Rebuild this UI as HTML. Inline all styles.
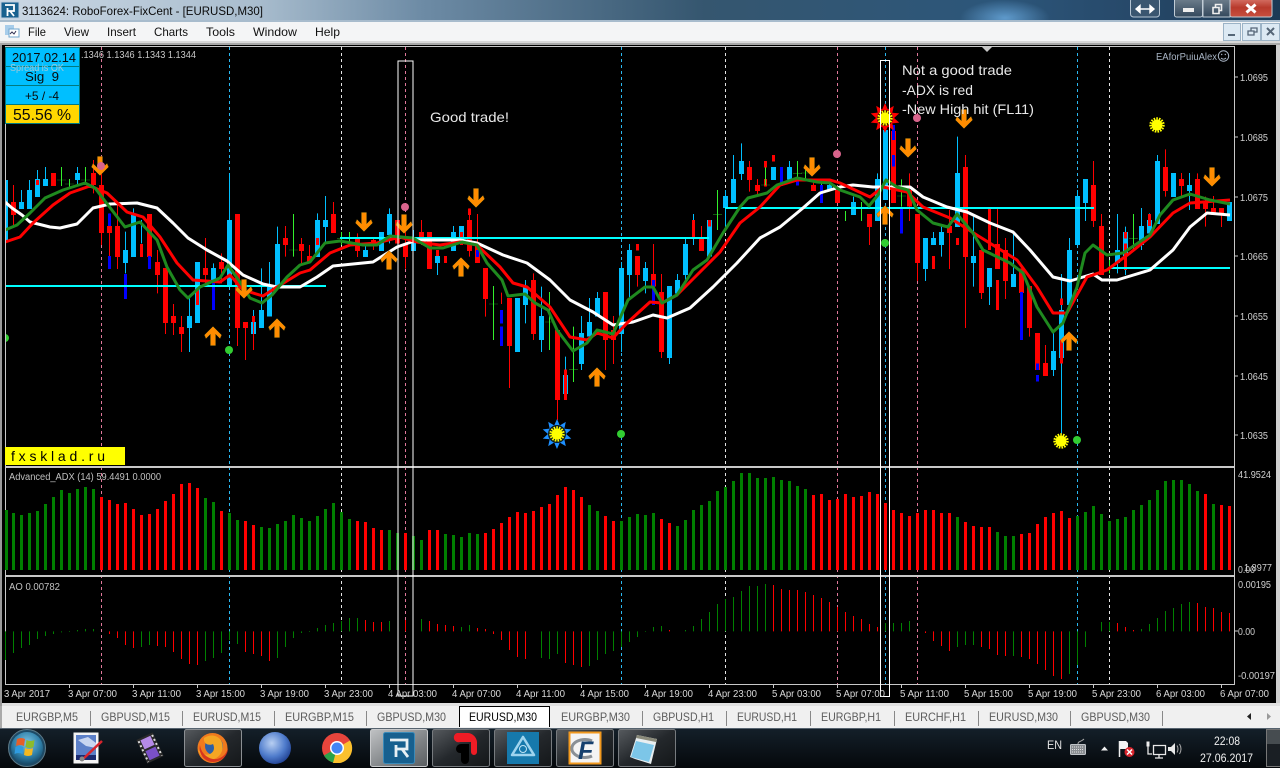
<!DOCTYPE html>
<html><head><meta charset="utf-8"><title>MT4</title>
<style>html,body{margin:0;padding:0;background:#000;overflow:hidden}svg{display:block}text{font-family:"Liberation Sans",sans-serif}</style></head>
<body>
<svg width="1280" height="768" viewBox="0 0 1280 768" xmlns="http://www.w3.org/2000/svg">
<defs>
<clipPath id="c"><rect x="6" y="47" width="1228" height="637"/></clipPath>
<linearGradient id="tb" x1="0" x2="1" y1="0" y2="0"><stop offset="0" stop-color="#cbd8e4"/><stop offset=".2" stop-color="#a9bdce"/><stop offset=".33" stop-color="#6d8ba5"/><stop offset=".55" stop-color="#35566f"/><stop offset=".78" stop-color="#2c567a"/><stop offset=".88" stop-color="#27496a"/><stop offset="1" stop-color="#1c3a55"/></linearGradient>
<radialGradient id="gl"><stop offset="0" stop-color="#6fb0e6" stop-opacity=".75"/><stop offset="1" stop-color="#6fb0e6" stop-opacity="0"/></radialGradient>
<radialGradient id="orb" cx=".5" cy=".35" r=".7"><stop offset="0" stop-color="#7cc4e4"/><stop offset=".6" stop-color="#2f7fa8"/><stop offset="1" stop-color="#123f5c"/></radialGradient>
<radialGradient id="moon" cx=".4" cy=".35" r=".7"><stop offset="0" stop-color="#b8cff2"/><stop offset=".6" stop-color="#4f7ccc"/><stop offset="1" stop-color="#1f3f90"/></radialGradient>
<linearGradient id="tk" x1="0" x2="0" y1="0" y2="1"><stop offset="0" stop-color="#14202a"/><stop offset="1" stop-color="#05080b"/></linearGradient>
<linearGradient id="bt" x1="0" x2="1" y1="0" y2="1"><stop offset="0" stop-color="#565a5e"/><stop offset=".5" stop-color="#24282c"/><stop offset="1" stop-color="#141719"/></linearGradient>
<linearGradient id="bta" x1="0" x2="1" y1="0" y2="1"><stop offset="0" stop-color="#c0c2c4"/><stop offset=".6" stop-color="#7e8285"/><stop offset="1" stop-color="#5a5e61"/></linearGradient>
<linearGradient id="cl" x1="0" x2="0" y1="0" y2="1"><stop offset="0" stop-color="#d8776c"/><stop offset=".5" stop-color="#b83a2c"/><stop offset="1" stop-color="#c9503f"/></linearGradient>
<linearGradient id="wb" x1="0" x2="0" y1="0" y2="1"><stop offset="0" stop-color="#70808e"/><stop offset="1" stop-color="#33485c"/></linearGradient>
<path id="d" d="M-2.5-9.5H2.5V2L7-2.5 8.5 1 0 9.5-8.5 1-7-2.5-2.5 2Z" fill="#ff8c00" stroke="#8a6a10" stroke-width=".5"/>
<path id="u" d="M-2.5 9.5H2.5V-2L7 2.5 8.5-1 0-9.5-8.5-1-7 2.5-2.5-2Z" fill="#ff8c00" stroke="#8a6a10" stroke-width=".5"/>
<polygon id="st" points="15,0 8.6,2.8 12.1,8.8 5.3,7.3 4.6,14.3 0,9 -4.6,14.3 -5.3,7.3 -12.1,8.8 -8.6,2.8 -15,0 -8.6,-2.8 -12.1,-8.8 -5.3,-7.3 -4.6,-14.3 0,-9 4.6,-14.3 5.3,-7.3 12.1,-8.8 8.6,-2.8"/>
<g id="sun"><circle r="5.5" fill="#ff0"/><circle r="6.5" fill="none" stroke="#ff0" stroke-width="2.4" stroke-dasharray="1.6 1.1"/></g>
</defs>

<!-- title bar -->
<rect width="1280" height="22" fill="url(#tb)"/>
<ellipse cx="1005" cy="18" rx="45" ry="18" fill="url(#gl)"/>
<rect y="20" width="1280" height="2" fill="#a8bccd"/>
<rect x="1" y="2" width="18" height="16" fill="#18618f" stroke="#bcd" stroke-width="1"/>
<path d="M5 5H14V11H7.500M7.500 8V16M10 11L14 16" fill="none" stroke="#fff" stroke-width="1.800"/>
<text x="22" y="15" font-size="12" fill="#0a0a0a" textLength="241" lengthAdjust="spacingAndGlyphs">3113624: RoboForex-FixCent - [EURUSD,M30]</text>
<rect x="1130.500" y="-2" width="29" height="19" rx="3" fill="#3a5670" stroke="#b4c4d2"/>
<path d="M1136 9h18M1136 9l4-3.500v7zM1154 9l-4-3.500v7z" stroke="#fff" fill="#fff" stroke-width="1.400"/>
<rect x="1174.500" y="-2" width="28" height="19" rx="2" fill="url(#wb)" stroke="#c0ccd6"/>
<rect x="1203" y="-2" width="27" height="19" fill="url(#wb)" stroke="#c0ccd6"/>
<rect x="1230" y="-2" width="42" height="19" rx="2" fill="url(#cl)" stroke="#c0ccd6"/>
<rect x="1183" y="8" width="11" height="4" fill="#eee"/>
<path d="M1213 7.500h6v6h-6zM1215.500 7v-2.500h6v6h-2" fill="none" stroke="#eee" stroke-width="1.600"/>
<path d="M1246.500 4.500l9 8M1255.500 4.500l-9 8" stroke="#fff" stroke-width="3"/>

<!-- menu bar -->
<rect y="22" width="1280" height="20" fill="#f4f5f6"/>
<rect y="41" width="1280" height="2" fill="#d8d8d8"/>
<rect x="5" y="25" width="9" height="10" fill="#a8cdea"/><rect x="9" y="29" width="10" height="8" fill="#fff" stroke="#6fa6cf"/><path d="M10 34l2-2 2 2 2-3" stroke="#335" fill="none"/>
<g font-size="12" fill="#111">
<text x="28" y="36" textLength="18" lengthAdjust="spacingAndGlyphs">File</text>
<text x="64" y="36" textLength="25" lengthAdjust="spacingAndGlyphs">View</text>
<text x="107" y="36" textLength="29" lengthAdjust="spacingAndGlyphs">Insert</text>
<text x="154" y="36" textLength="34" lengthAdjust="spacingAndGlyphs">Charts</text>
<text x="206" y="36" textLength="29" lengthAdjust="spacingAndGlyphs">Tools</text>
<text x="253" y="36" textLength="44" lengthAdjust="spacingAndGlyphs">Window</text>
<text x="315" y="36" textLength="25" lengthAdjust="spacingAndGlyphs">Help</text>
</g>
<g fill="#dce9f3" stroke="#9cb3c6"><rect x="1223.500" y="23.500" width="17" height="17"/><rect x="1242.500" y="23.500" width="18" height="17"/><rect x="1261.500" y="23.500" width="18" height="17"/></g>
<rect x="1228" y="34" width="7" height="2" fill="#567"/>
<path d="M1248 31h6v4h-6zM1251 31v-3h6v4h-3" fill="none" stroke="#567" stroke-width="1.300"/>
<path d="M1267 28l7 7M1274 28l-7 7" stroke="#567" stroke-width="2"/>

<!-- chart area -->
<rect x="0" y="43" width="1280" height="663" fill="#000"/>
<rect x="0" y="43" width="2" height="663" fill="#9a9a9a"/>
<rect x="1276" y="43" width="4" height="663" fill="#cfcfcf"/>
<rect x="0" y="43" width="1280" height="2" fill="#a8a8a8"/>
<rect x="2" y="703" width="1278" height="3" fill="#e0e0e0"/>

<!-- dashed grid -->
<g fill="none" stroke-width="1" stroke-dasharray="3 3">
<path stroke="#e0789a" d="M101.500 47V684M405.500 47V684M837.500 47V684M917.500 47V684"/>
<path stroke="#2ab8f0" d="M5.500 47V684M229.500 47V684M621.500 47V684M885.500 47V684M1077.500 47V684"/>
<path stroke="#e4e4e4" d="M341.500 47V684M725.500 47V684M1109.500 47V684"/>
</g>

<g clip-path="url(#c)">
<!-- candles group A -->
<g transform="translate(0 130) scale(1 .33333)" fill="none" shape-rendering="crispEdges">
<path stroke="#00bfff" d="M21.500 180V237M29.500 150V180M37.500 120V147M45.500 111V147M77.500 111V165M125.500 305V430M133.500 235V255M141.500 270V340M189.500 500V666M213.500 400V414M229.500 130V470M253.500 540V576M261.500 415V540M269.500 396V465M277.500 290V342M317.500 250V270M325.500 198V340M365.500 340V360M389.500 235V340M413.500 300V324"/>
<path stroke="#00bfff" stroke-width="5" d="M5.500 150V330M21.500 216V237M29.500 180V237M37.500 147V201M45.500 147V168M77.500 129V150M125.500 360V399M133.500 255V381M189.500 558V594M197.500 396V579M213.500 414V450M229.500 270V465M253.500 576V612M261.500 540V594M269.500 465V560M277.500 342V465M317.500 270V381M325.500 270V291M365.500 360V381M381.500 306V363M389.500 252V315M413.500 324V363"/>
<path stroke="#f00" d="M13.500 165V290M93.500 90V190M101.500 130V345M109.500 250V400M117.500 225V417M157.500 360V490M165.500 579V612M173.500 522V615M181.500 558V666M205.500 324V460M221.500 370V460M237.500 594V648M245.500 594V690M253.500 576V660M285.500 288V380M301.500 324V400M309.500 345V396M333.500 216V252M357.500 310V381M373.500 324V360M405.500 300V416"/>
<path stroke="#f00" stroke-width="5" d="M13.500 216V255M53.500 129V168M93.500 129V165M101.500 165V309M109.500 288V309M117.500 288V381M149.500 252V381M157.500 396V435M165.500 414V579M173.500 558V579M181.500 591V612M205.500 414V435M221.500 396V417M237.500 252V594M245.500 576V594M285.500 324V345M301.500 342V363M309.500 378V396M333.500 252V309M357.500 324V363M373.500 330V345M397.500 270V340M405.500 342V381"/>
<path stroke="#f00" stroke-width="3" d="M37.500 150V165M141.500 342V381M197.500 480V525M253.500 558V576M317.500 324V345"/>
<path stroke="#32f02c" d="M61.500 111V168M57 150H66M69.500 147V175M65 162H74M85.500 111V160M81 150H90M293.500 252V380M289 360H298M341.500 306V345M337 325H346M349.500 306V345M345 325H354"/>
<path stroke="#00f" stroke-width="3" d="M109.500 250V288M109.500 378V417M125.500 432V507M149.500 378V417M213.500 456V540"/>
</g>
<!-- candles group B -->
<g transform="translate(0 130) scale(1 .33333)" fill="none" shape-rendering="crispEdges">
<path stroke="#00bfff" d="M437.500 399V435M453.500 288V306M525.500 450V580M541.500 470V666M565.500 680V735M581.500 558V720M589.500 504V576M597.500 486V504M621.500 396V666M629.500 342V510M645.500 396V490M677.500 432V450M685.500 324V450M693.500 252V345M725.500 180V300M733.500 75V147M741.500 40V150M789.500 93V111M797.500 93V150M781.500 111V168M829.500 148V165M669.500 684V702"/>
<path stroke="#00bfff" stroke-width="5" d="M437.500 378V399M453.500 306V363M461.500 288V330M517.500 504V666M525.500 470V525M541.500 558V630M565.500 735V792M581.500 609V702M589.500 576V620M597.500 504V560M621.500 414V612M629.500 360V435M645.500 414V453M669.500 468V684M677.500 450V490M685.500 342V435M709.500 270V380M725.500 198V234M733.500 147V219M741.500 93V132M773.500 111V150M789.500 111V148M829.500 165V180"/>
<path stroke="#f00" d="M421.500 270V345M477.500 252V340M469.500 235V380M485.500 507V560M501.500 488V522M509.500 648V774M533.500 430V630M557.500 810V870M605.500 630V720M613.500 558V702M637.500 435V470M653.500 342V432M661.500 432V684M701.500 288V324M749.500 93V185M757.500 147V200M765.500 147V170M813.500 148V165"/>
<path stroke="#f00" stroke-width="5" d="M421.500 306V324M429.500 306V417M469.500 270V363M477.500 340V399M485.500 414V507M509.500 504V648M533.500 450V612M557.500 600V810M605.500 486V630M613.500 600V630M637.500 378V435M653.500 432V470M661.500 486V666M701.500 324V363M749.500 111V150M757.500 165V183M813.500 165V183M837.500 180V219"/>
<path stroke="#f00" stroke-width="3" d="M437.500 360V378M445.500 378V399M461.500 306V345M469.500 235V255M565.500 718V810M637.500 342V362M693.500 270V325M709.500 270V290M765.500 93V112M765.500 147V170M773.500 75V95"/>
<path stroke="#32f02c" d="M493.500 468V630M489 522H498M549.500 486V660M545 576H554M573.500 590V756M569 718H578M717.500 180V300M713 253H722M765.500 112V165M761 165H770M797.500 93V150M793 130H802M805.500 112V148M801 129H810M821.500 148V165"/>
<path stroke="#00f" stroke-width="3" d="M477.500 360V381M501.500 540V580M501.500 590V648M653.500 450V525M781.500 111V168M797.500 147V167M821.500 165V219"/>
</g>
<!-- candles group C -->
<g transform="translate(0 100) scale(1 .33333)" fill="none" shape-rendering="crispEdges">
<path stroke="#00bfff" d="M853.500 290V306M877.500 220V237M925.500 507V543M933.500 396V414M941.500 378V470M957.500 110V219M973.500 350V560M989.500 561V615M1013.500 400V522M1053.500 700V828M1061.500 522V1000M1069.500 414V450M1077.500 270V288M1085.500 309V363M1117.500 342V520M1125.500 380V525M1141.500 324V450M1149.500 340V400M1157.500 165V183M1189.500 219V330"/>
<path stroke="#00bfff" stroke-width="5" d="M853.500 306V345M877.500 237V363M885.500 90V300M925.500 414V507M933.500 414V435M941.500 396V435M957.500 219V381M973.500 468V489M989.500 504V561M1013.500 522V561M1053.500 753V810M1061.500 630V774M1069.500 450V615M1077.500 288V435M1085.500 237V309M1117.500 450V489M1125.500 396V468M1141.500 378V435M1149.500 360V400M1157.500 183V372M1173.500 219V291M1189.500 255V273M1229.500 306V363"/>
<path stroke="#f00" d="M869.500 381V435M909.500 220V363M917.500 489V543M949.500 330V507M965.500 165V684M981.500 579V597M997.500 326V432M1005.500 414V597M1029.500 684V710M1045.500 735V789M1093.500 183V381M1101.500 342V520M1165.500 148V290M1181.500 219V290M1197.500 220V237M1205.500 290V380M1213.500 288V345M1221.500 345V381"/>
<path stroke="#f00" stroke-width="5" d="M869.500 342V381M893.500 93V309M909.500 270V320M917.500 342V489M949.500 378V399M965.500 201V471M981.500 450V579M997.500 432V507M1005.500 450V543M1021.500 505V579M1029.500 558V684M1037.500 699V810M1045.500 789V828M1093.500 255V363M1101.500 378V525M1165.500 201V273M1181.500 237V258M1197.500 237V327M1205.500 306V327M1213.500 324V345M1221.500 324V345"/>
<path stroke="#f00" stroke-width="3" d="M933.500 468V507M957.500 414V435M989.500 324V450M997.500 540V630M1061.500 595V615M1061.500 720V790M1125.500 396V415M1125.500 430V510M1149.500 342V378"/>
<path stroke="#32f02c" d="M845.500 333V363M861.500 306V363M901.500 238V320M897 288H906M1109.500 480V520M1133.500 342V450M1129 415H1138"/>
<path stroke="#00f" stroke-width="3" d="M893.500 75V120M893.500 165V200M901.500 324V400M1021.500 576V720M1037.500 790V810M1037.500 825V845"/>
</g>

<!-- horizontal cyan -->
<path d="M5 286H326M340 238H709M725 208H1094M1109 268H1230" stroke="#0ff" stroke-width="2" fill="none"/>

<!-- moving averages -->
<g fill="none" stroke-width="3" stroke-linejoin="round">
<polyline stroke="#fff" points="5,202 12,208 22,215 30,222 50,227 60,228 77,224 93,208 110,204 137,203 157,208 173,223 188,238 207,250 227,261 243,275 263,284 277,287 300,287 317,277 333,266 373,262 397,247 417,240 460,240 477,243 503,255 527,263 550,280 570,300 593,312 613,325 633,322 653,315 667,318 690,308 713,287 737,263 760,238 780,227 803,208 820,193 840,187 853,185 873,187 910,187 923,197 947,207 967,212 990,223 1013,232 1030,250 1053,277 1070,281 1093,274 1102,280 1117,280 1150,270 1173,250 1190,227 1207,213 1230,215"/>
<polyline stroke="#f00" points="5,242 20,237 33,223 53,205 70,193 90,186 107,193 127,212 143,217 160,237 177,263 193,280 220,282 230,275 243,290 263,296 277,287 300,273 310,270 330,253 350,245 377,243 400,237 417,242 440,245 460,242 477,245 500,267 513,283 527,287 550,307 570,337 587,340 597,333 613,338 627,323 650,302 662,303 677,295 697,275 720,252 740,223 760,207 780,185 797,180 830,180 840,183 870,197 883,187 907,192 923,207 950,218 980,237 1017,260 1037,287 1053,313 1067,313 1087,277 1107,270 1130,253 1150,237 1173,213 1190,203 1230,200"/>
<polyline stroke="#1f8a1f" points="5,230 17,225 30,213 45,198 63,190 85,183 95,188 108,205 125,227 140,222 157,240 167,267 180,290 188,298 200,287 220,278 228,265 242,285 250,298 262,303 272,295 287,277 300,265 310,262 325,243 340,241 363,245 377,245 390,236 413,238 430,248 443,248 462,242 477,245 487,263 502,280 508,296 525,294 535,303 548,310 557,330 573,351 587,343 597,330 613,334 628,300 645,287 653,287 662,303 677,295 693,270 707,260 723,233 740,207 748,198 767,193 777,185 797,178 817,182 830,183 840,190 860,197 869,206 878,195 886,180 897,187 908,190 917,210 933,223 948,227 957,214 973,233 983,250 1010,263 1023,273 1037,307 1053,332 1063,323 1077,287 1085,253 1093,245 1107,255 1123,253 1150,235 1160,215 1173,200 1190,194 1210,200 1230,204"/>
</g>

<!-- arrows -->
<use href="#d" x="100" y="166"/><use href="#d" x="364" y="222"/><use href="#d" x="404" y="224"/><use href="#d" x="244" y="289"/><use href="#d" x="476" y="198"/><use href="#d" x="812" y="167"/><use href="#d" x="908" y="148"/><use href="#d" x="964" y="119"/><use href="#d" x="1212" y="177"/>
<use href="#u" x="213" y="336"/><use href="#u" x="277" y="328"/><use href="#u" x="389" y="260"/><use href="#u" x="461" y="267"/><use href="#u" x="597" y="377"/><use href="#u" x="885" y="215"/><use href="#u" x="1069" y="341"/>

<!-- dots -->
<g fill="#d8648c"><circle cx="101" cy="166" r="4"/><circle cx="405" cy="207" r="4"/><circle cx="837" cy="154" r="4"/><circle cx="917" cy="118" r="4"/></g>
<g fill="#32cd32"><circle cx="229" cy="350" r="4"/><circle cx="621" cy="434" r="4"/><circle cx="885" cy="243" r="4"/><circle cx="1077" cy="440" r="4"/><circle cx="5" cy="338" r="4"/></g>

<!-- stars -->
<g transform="translate(557 434)"><use href="#st" fill="#1e90ff" transform="rotate(18)"/><circle r="9" fill="#0a1a20"/><use href="#sun"/></g>
<g transform="translate(885 118)"><use href="#st" fill="#f00" transform="rotate(18)"/><circle r="8" fill="#300"/><use href="#sun"/></g>
<use href="#sun" x="1061" y="441"/><use href="#sun" x="1157" y="125"/>
</g>

<!-- panes frame -->
<g fill="none" stroke="#c8c8c8">
<path d="M5.500 46.500H1234.500V684.500H5.500Z"/>
<path d="M5 466.500H1234M5 467.500H1234M5 575.500H1234M5 576.500H1234"/>
</g>
<path d="M981 46h12l-6 6z" fill="#c8c8c8"/>

<!-- ADX -->
<g transform="translate(0 460) scale(1 .33333)" fill="none" stroke-width="3" shape-rendering="crispEdges" clip-path="none">
<path stroke="#008000" d="M6.500 330V150M13.500 330V159M21.500 330V165M29.500 330V159M37.500 330V153M45.500 330V132M53.500 330V111M61.500 330V90M69.500 330V99M77.500 330V87M85.500 330V81M93.500 330V87M205.500 330V114M213.500 330V126M229.500 330V159M237.500 330V180M261.500 330V201M269.500 330V204M277.500 330V192M285.500 330V183M293.500 330V165M301.500 330V174M309.500 330V183M317.500 330V168M325.500 330V147M333.500 330V129M341.500 330V156M349.500 330V177M389.500 330V210M397.500 330V219M413.500 330V228M421.500 330V240M445.500 330V222M453.500 330V225M461.500 330V231M469.500 330V219M477.500 330V222M589.500 330V135M597.500 330V153M621.500 330V183M629.500 330V171M637.500 330V162M645.500 330V165M653.500 330V159M677.500 330V198M685.500 330V180M693.500 330V150M701.500 330V135M709.500 330V123M717.500 330V93M725.500 330V81M733.500 330V63M741.500 330V39M749.500 330V39M757.500 330V54M765.500 330V54M773.500 330V51M781.500 330V60M789.500 330V63M797.500 330V78M805.500 330V87M957.500 330V171M997.500 330V216M1005.500 330V228M1013.500 330V228M1077.500 330V168M1085.500 330V156M1093.500 330V138M1101.500 330V162M1109.500 330V183M1117.500 330V177M1125.500 330V171M1133.500 330V150M1141.500 330V135M1149.500 330V120M1157.500 330V90M1165.500 330V63M1173.500 330V60M1181.500 330V60M1189.500 330V72M1197.500 330V93M1213.500 330V132"/>
<path stroke="#f00" d="M101.500 330V111M109.500 330V120M117.500 330V132M125.500 330V129M133.500 330V147M141.500 330V165M149.500 330V162M157.500 330V147M165.500 330V123M173.500 330V102M181.500 330V72M189.500 330V69M197.500 330V84M221.500 330V153M245.500 330V183M253.500 330V195M357.500 330V183M365.500 330V186M373.500 330V204M381.500 330V210M405.500 330V219M429.500 330V210M437.500 330V210M485.500 330V219M493.500 330V207M501.500 330V189M509.500 330V171M517.500 330V156M525.500 330V159M533.500 330V153M541.500 330V141M549.500 330V132M557.500 330V105M565.500 330V81M573.500 330V90M581.500 330V111M605.500 330V168M613.500 330V183M661.500 330V177M669.500 330V189M813.500 330V105M821.500 330V102M829.500 330V120M837.500 330V117M845.500 330V102M853.500 330V111M861.500 330V108M869.500 330V96M877.500 330V102M885.500 330V129M893.500 330V150M901.500 330V159M909.500 330V168M917.500 330V159M925.500 330V150M933.500 330V150M941.500 330V159M949.500 330V159M965.500 330V186M973.500 330V198M981.500 330V201M989.500 330V201M1021.500 330V222M1029.500 330V219M1037.500 330V192M1045.500 330V171M1053.500 330V159M1061.500 330V153M1069.500 330V174M1205.500 330V102M1221.500 330V135M1229.500 330V138"/>
</g>

<!-- AO -->
<g transform="translate(0 460) scale(1 .33333)" fill="none" stroke-width="1" shape-rendering="crispEdges">
<path stroke="#008000" d="M5.500 514V600M13.500 514V579M21.500 514V564M29.500 514V555M37.500 514V537M45.500 514V528M53.500 514V522M61.500 514V517M69.500 514V516M77.500 514V510M85.500 514V507M93.500 514V507M141.500 514V561M149.500 514V555M205.500 514V603M213.500 514V594M221.500 514V579M229.500 514V540M237.500 514V552M277.500 514V594M285.500 514V561M293.500 514V534M301.500 514V519M309.500 514V516M317.500 514V504M325.500 514V495M333.500 514V489M341.500 514V483M349.500 514V474M357.500 514V474M389.500 514V483M421.500 514V477M461.500 514V501M469.500 514V495M541.500 514V594M549.500 514V597M557.500 514V582M589.500 514V618M597.500 514V600M605.500 514V582M613.500 514V573M621.500 514V561M629.500 514V546M637.500 514V531M645.500 514V516M653.500 514V501M661.500 514V498M685.500 514V510M693.500 514V498M701.500 514V477M709.500 514V456M717.500 514V432M725.500 514V417M733.500 514V411M741.500 514V393M749.500 514V378M757.500 514V378M765.500 514V372M885.500 514V489M893.500 514V489M901.500 514V489M909.500 514V483M957.500 514V561M965.500 514V555M973.500 514V555M1013.500 514V588M1069.500 514V642M1077.500 514V615M1085.500 514V561M1101.500 514V486M1109.500 514V486M1141.500 514V507M1149.500 514V492M1157.500 514V474M1165.500 514V453M1173.500 514V444M1181.500 514V432M1189.500 514V426"/>
<path stroke="#f00" d="M109.500 514V522M117.500 514V534M125.500 514V555M133.500 514V564M157.500 514V558M165.500 514V561M173.500 514V576M181.500 514V597M189.500 514V612M197.500 514V615M245.500 514V576M253.500 514V582M261.500 514V588M269.500 514V603M365.500 514V480M373.500 514V486M381.500 514V486M405.500 514V480M429.500 514V483M437.500 514V492M445.500 514V495M453.500 514V498M477.500 514V504M485.500 514V507M493.500 514V522M501.500 514V540M509.500 514V570M517.500 514V591M525.500 514V597M565.500 514V609M573.500 514V615M581.500 514V621M669.500 514V510M773.500 514V375M781.500 514V387M789.500 514V390M797.500 514V390M805.500 514V396M813.500 514V405M821.500 514V414M829.500 514V426M837.500 514V441M845.500 514V456M853.500 514V468M861.500 514V477M869.500 514V492M877.500 514V501M925.500 514V519M933.500 514V543M941.500 514V558M949.500 514V573M981.500 514V561M989.500 514V567M997.500 514V585M1005.500 514V588M1021.500 514V591M1029.500 514V597M1037.500 514V612M1045.500 514V630M1053.500 514V648M1061.500 514V657M1117.500 514V489M1125.500 514V501M1133.500 514V510M1197.500 514V429M1205.500 514V441M1213.500 514V444M1221.500 514V456M1229.500 514V459"/>
</g>

<!-- annotation boxes -->
<rect x="398" y="61" width="15" height="635" fill="none" stroke="#fff"/>
<rect x="880.500" y="60.500" width="9" height="636" fill="none" stroke="#fff"/>

<!-- info panel -->
<g stroke="#007a80" stroke-width="1">
<rect x="5.500" y="47.500" width="74" height="19" fill="#00bfff"/>
<rect x="5.500" y="66.500" width="74" height="19" fill="#00bfff"/>
<rect x="5.500" y="85.500" width="74" height="19" fill="#00bfff"/>
<rect x="5.500" y="104.500" width="74" height="19" fill="#ffd700"/>
</g>
<g fill="#0a0a0a">
<text x="12" y="62" font-size="13" textLength="64" lengthAdjust="spacingAndGlyphs">2017.02.14</text>
<text x="25" y="81" font-size="13" textLength="34" lengthAdjust="spacingAndGlyphs" xml:space="preserve">Sig  9</text>
<text x="25" y="100" font-size="12" textLength="34" lengthAdjust="spacingAndGlyphs">+5 / -4</text>
<text x="13" y="120" font-size="16" textLength="58" lengthAdjust="spacingAndGlyphs">55.56 %</text>
</g>
<text x="10" y="71" font-size="10" fill="#9fc8d8" textLength="54" lengthAdjust="spacingAndGlyphs">Spread is OK</text>
<text x="81" y="58" font-size="10" fill="#c8c8c8" textLength="115" lengthAdjust="spacingAndGlyphs">.1346 1.1346 1.1343 1.1344</text>

<rect x="5" y="447" width="120" height="18" fill="#ff0"/>
<text x="11" y="461" font-size="14" fill="#000" textLength="94">fxsklad.ru</text>

<!-- annotation text -->
<g font-size="14" fill="#e8e8e8">
<text x="430" y="122" textLength="79" lengthAdjust="spacingAndGlyphs">Good trade!</text>
<text x="902" y="75" textLength="110" lengthAdjust="spacingAndGlyphs">Not a good trade</text>
<text x="902" y="95" textLength="71" lengthAdjust="spacingAndGlyphs">-ADX is red</text>
<text x="902" y="114" textLength="132" lengthAdjust="spacingAndGlyphs">-New High hit (FL11)</text>
</g>
<text x="1156" y="60" font-size="10" fill="#a8b4c4" textLength="61" lengthAdjust="spacingAndGlyphs">EAforPuiuAlex</text>
<g fill="none" stroke="#a8b4c4"><circle cx="1223.500" cy="56" r="5.200"/><path d="M1221 58c1.500 1.500 3.500 1.500 5 0"/></g>
<circle cx="1221.700" cy="54.500" r=".7" fill="#a8b4c4"/><circle cx="1225.300" cy="54.500" r=".7" fill="#a8b4c4"/>

<!-- panel labels -->
<g font-size="10" fill="#c0c0c0">
<text x="9" y="480" textLength="152" lengthAdjust="spacingAndGlyphs">Advanced_ADX (14) 59.4491 0.0000</text>
<text x="9" y="590" textLength="51" lengthAdjust="spacingAndGlyphs">AO 0.00782</text>
</g>

<!-- price axis -->
<path d="M1234 77h4M1234 137h4M1234 197h4M1234 256h4M1234 316h4M1234 376h4M1234 435h4M1234 631h4" stroke="#c8c8c8"/>
<g font-size="10" fill="#d0d0d0">
<text x="1240" y="81" textLength="28" lengthAdjust="spacingAndGlyphs">1.0695</text>
<text x="1240" y="141" textLength="28" lengthAdjust="spacingAndGlyphs">1.0685</text>
<text x="1240" y="201" textLength="28" lengthAdjust="spacingAndGlyphs">1.0675</text>
<text x="1240" y="260" textLength="28" lengthAdjust="spacingAndGlyphs">1.0665</text>
<text x="1240" y="320" textLength="28" lengthAdjust="spacingAndGlyphs">1.0655</text>
<text x="1240" y="380" textLength="28" lengthAdjust="spacingAndGlyphs">1.0645</text>
<text x="1240" y="439" textLength="28" lengthAdjust="spacingAndGlyphs">1.0635</text>
<text x="1238" y="478" textLength="33" lengthAdjust="spacingAndGlyphs">41.9524</text>
<text x="1238" y="573" textLength="17" lengthAdjust="spacingAndGlyphs">0.00</text>
<text x="1244" y="571" textLength="28" lengthAdjust="spacingAndGlyphs">1.8977</text>
<text x="1238" y="588" textLength="33" lengthAdjust="spacingAndGlyphs">0.00195</text>
<text x="1238" y="635" textLength="17" lengthAdjust="spacingAndGlyphs">0.00</text>
<text x="1238" y="679" textLength="37" lengthAdjust="spacingAndGlyphs">-0.00197</text>
</g>

<!-- time axis -->
<path d="M69.500 684v4M133.500 684v4M197.500 684v4M261.500 684v4M325.500 684v4M389.500 684v4M453.500 684v4M517.500 684v4M581.500 684v4M645.500 684v4M709.500 684v4M773.500 684v4M837.500 684v4M901.500 684v4M965.500 684v4M1029.500 684v4M1093.500 684v4M1157.500 684v4M1221.500 684v4" stroke="#c8c8c8"/>
<g font-size="10" fill="#d8d8d8">
<text x="4" y="697" textLength="46" lengthAdjust="spacingAndGlyphs">3 Apr 2017</text>
<text x="68" y="697" textLength="49" lengthAdjust="spacingAndGlyphs">3 Apr 07:00</text>
<text x="132" y="697" textLength="49" lengthAdjust="spacingAndGlyphs">3 Apr 11:00</text>
<text x="196" y="697" textLength="49" lengthAdjust="spacingAndGlyphs">3 Apr 15:00</text>
<text x="260" y="697" textLength="49" lengthAdjust="spacingAndGlyphs">3 Apr 19:00</text>
<text x="324" y="697" textLength="49" lengthAdjust="spacingAndGlyphs">3 Apr 23:00</text>
<text x="388" y="697" textLength="49" lengthAdjust="spacingAndGlyphs">4 Apr 03:00</text>
<text x="452" y="697" textLength="49" lengthAdjust="spacingAndGlyphs">4 Apr 07:00</text>
<text x="516" y="697" textLength="49" lengthAdjust="spacingAndGlyphs">4 Apr 11:00</text>
<text x="580" y="697" textLength="49" lengthAdjust="spacingAndGlyphs">4 Apr 15:00</text>
<text x="644" y="697" textLength="49" lengthAdjust="spacingAndGlyphs">4 Apr 19:00</text>
<text x="708" y="697" textLength="49" lengthAdjust="spacingAndGlyphs">4 Apr 23:00</text>
<text x="772" y="697" textLength="49" lengthAdjust="spacingAndGlyphs">5 Apr 03:00</text>
<text x="836" y="697" textLength="49" lengthAdjust="spacingAndGlyphs">5 Apr 07:00</text>
<text x="900" y="697" textLength="49" lengthAdjust="spacingAndGlyphs">5 Apr 11:00</text>
<text x="964" y="697" textLength="49" lengthAdjust="spacingAndGlyphs">5 Apr 15:00</text>
<text x="1028" y="697" textLength="49" lengthAdjust="spacingAndGlyphs">5 Apr 19:00</text>
<text x="1092" y="697" textLength="49" lengthAdjust="spacingAndGlyphs">5 Apr 23:00</text>
<text x="1156" y="697" textLength="49" lengthAdjust="spacingAndGlyphs">6 Apr 03:00</text>
<text x="1220" y="697" textLength="49" lengthAdjust="spacingAndGlyphs">6 Apr 07:00</text>
</g>

<!-- tabs -->
<rect y="706" width="1280" height="22" fill="#f0f0f0"/>
<rect x="0" y="706" width="2" height="22" fill="#aaa"/>
<path d="M90.500 711v15M182.500 711v15M274.500 711v15M366.500 711v15M642.500 711v15M726.500 711v15M810.500 711v15M894.500 711v15M978.500 711v15M1070.500 711v15M1162.500 711v15" stroke="#888"/>
<path d="M459.500 727V706.500H549.500V727" fill="#fff" stroke="#000"/>
<rect x="460" y="707" width="89" height="20" fill="#fff"/>
<g font-size="12" fill="#5c5c5c">
<text x="16" y="721" textLength="62" lengthAdjust="spacingAndGlyphs">EURGBP,M5</text>
<text x="101" y="721" textLength="69" lengthAdjust="spacingAndGlyphs">GBPUSD,M15</text>
<text x="193" y="721" textLength="68" lengthAdjust="spacingAndGlyphs">EURUSD,M15</text>
<text x="285" y="721" textLength="69" lengthAdjust="spacingAndGlyphs">EURGBP,M15</text>
<text x="377" y="721" textLength="69" lengthAdjust="spacingAndGlyphs">GBPUSD,M30</text>
<text x="469" y="721" textLength="68" lengthAdjust="spacingAndGlyphs" fill="#000">EURUSD,M30</text>
<text x="561" y="721" textLength="69" lengthAdjust="spacingAndGlyphs">EURGBP,M30</text>
<text x="653" y="721" textLength="61" lengthAdjust="spacingAndGlyphs">GBPUSD,H1</text>
<text x="737" y="721" textLength="60" lengthAdjust="spacingAndGlyphs">EURUSD,H1</text>
<text x="821" y="721" textLength="60" lengthAdjust="spacingAndGlyphs">EURGBP,H1</text>
<text x="905" y="721" textLength="61" lengthAdjust="spacingAndGlyphs">EURCHF,H1</text>
<text x="989" y="721" textLength="69" lengthAdjust="spacingAndGlyphs">EURUSD,M30</text>
<text x="1081" y="721" textLength="69" lengthAdjust="spacingAndGlyphs">GBPUSD,M30</text>
</g>
<path d="M1251 713v7l-4-3.500z" fill="#222"/><path d="M1267 713v7l4-3.500z" fill="#999"/>

<!-- taskbar -->
<rect y="728" width="1280" height="40" fill="url(#tk)"/>
<rect y="728" width="1280" height="1" fill="#56636f"/>
<rect x="184.500" y="729.500" width="57" height="37" rx="2" fill="url(#bt)" stroke="#8b8f93"/>
<rect x="370.500" y="729.500" width="57" height="37" rx="2" fill="url(#bta)" stroke="#c8cacc"/>
<rect x="432.500" y="729.500" width="57" height="37" rx="2" fill="url(#bt)" stroke="#777b7f"/>
<rect x="494.500" y="729.500" width="57" height="37" rx="2" fill="url(#bt)" stroke="#777b7f"/>
<rect x="556.500" y="729.500" width="57" height="37" rx="2" fill="url(#bt)" stroke="#777b7f"/>
<rect x="618.500" y="729.500" width="57" height="37" rx="2" fill="url(#bt)" stroke="#777b7f"/>

<!-- start orb -->
<circle cx="27" cy="748" r="18.500" fill="#1d4a66" stroke="#5d7a88"/>
<circle cx="27" cy="748" r="16" fill="url(#orb)"/>
<path d="M17 739q4-2 8 0l-1 7q-4-2-8 0z" fill="#e55f2a"/><path d="M26.500 740q4 2 8 0l-1 7q-4 2-8 0z" fill="#8cbb2a"/>
<path d="M15.500 747q4-2 8 0l-1 7q-4-2-8 0z" fill="#2f9be0"/><path d="M25 748q4 2 8 0l-1 7q-4 2-8 0z" fill="#f5b820"/>

<!-- paint -->
<rect x="73.500" y="732.500" width="25" height="31" fill="#f4f4f4"/>
<rect x="76" y="735" width="20" height="20" fill="#5c80c8"/><path d="M78 740l10-3 8 6v5l-10-2z" fill="#c8d6f0"/><rect x="76" y="755" width="20" height="5" fill="#1b2a70"/>
<path d="M102 741L82 760" stroke="#d8242c" stroke-width="2.500"/><circle cx="82" cy="759" r="2.500" fill="#888"/>
<!-- film -->
<g transform="rotate(-25 150 748)"><rect x="141" y="735" width="18" height="26" fill="#2a2a2a"/><rect x="144.500" y="737" width="11" height="10" fill="#b58ae8"/><rect x="144.500" y="749" width="11" height="10" fill="#7a50c8"/><path d="M142.500 737v23M157.500 737v23" stroke="#ddd" stroke-width="2" stroke-dasharray="2 2.500"/></g>
<!-- firefox -->
<circle cx="212.500" cy="748" r="15" fill="#f07a1e"/><circle cx="214" cy="746" r="9" fill="#2d5fa6"/>
<path d="M204 738c6-4 12-3 16 1 5 6 3 17-6 20-8 2-15-3-16-10 2 4 7 7 12 5 4-2 5-6 3-10-4 2-10 0-9-6z" fill="#f5a623"/><path d="M200 745c-2 8 4 17 13 17 9 0 15-7 15-14-2 8-9 12-15 11-6-1-12-6-13-14z" fill="#d6361f"/>
<!-- globe -->
<circle cx="275" cy="748" r="16" fill="url(#moon)"/>
<!-- chrome -->
<circle cx="337" cy="748" r="15" fill="#e8453c"/><path d="M337 748L324 755.500A15 15 0 0 0 337 763L348 758z" fill="#2aa24a"/><path d="M337 748L350 740.500A15 15 0 0 1 340 763L333 763z" fill="#fbc02d"/><circle cx="337" cy="748" r="7" fill="#fff"/><circle cx="337" cy="748" r="5.500" fill="#4285f4"/>
<!-- R -->
<rect x="383.500" y="732.500" width="31" height="31" rx="2" fill="#17608f" stroke="#3a8ab8"/>
<path d="M390 740H407V749H396M396 745V757M402 749L408 757" fill="none" stroke="#e8f0f4" stroke-width="2.800"/>
<!-- red black arrow -->
<path d="M456 749a5 5 0 0 1 5-5H469v16a4 4 0 0 1-8 0V753h-1a4 4 0 0 1-4-4z" fill="#000"/><path d="M457 733h11a10 10 0 0 1 9 9v10a3 3 0 0 1-6 0V742H460a4 4 0 0 1-3-9z" fill="#ee1c25"/>
<!-- blue shield -->
<rect x="507" y="732" width="32" height="32" fill="#1679ac"/>
<path d="M523 737l11 18H512z" fill="none" stroke="#9fd4ee" stroke-width="2.500" stroke-linejoin="round"/><circle cx="523" cy="749" r="3.500" fill="none" stroke="#bfe3f5"/>
<!-- F -->
<rect x="569.500" y="732.500" width="31" height="31" fill="#f4f4f4" stroke="#f2991e" stroke-width="2"/>
<path d="M592 741a13 9 0 1 0 0 15" fill="none" stroke="#8a9096" stroke-width="3"/>
<text x="578" y="759" font-size="25" font-weight="bold" font-style="italic" fill="#16406e">F</text>
<!-- notepad -->
<path d="M637 735l20 4-6 25-16-5-5-2z" fill="#e8eef0"/><path d="M636 741l18 4-5 17-18-5z" fill="#7cc6e8"/><path d="M637 735l20 4-1 3-20-4z" fill="#8a8a7a"/>

<!-- tray -->
<text x="1047" y="749" font-size="12" fill="#e4e4e4" textLength="15" lengthAdjust="spacingAndGlyphs">EN</text>
<rect x="1070.500" y="744.500" width="15" height="10" rx="1" fill="#8a8e92" stroke="#c0c4c8"/><path d="M1072 747h12M1072 749.500h12M1072 752h12" stroke="#e0e0e0" stroke-dasharray="1 1"/><path d="M1078 744c0-3 3-2 6-5" stroke="#aaa" fill="none"/>
<path d="M1101 750.500h7l-3.500-4z" fill="#eee"/>
<path d="M1119.500 741v16" stroke="#eee" stroke-width="1.500"/><path d="M1120 741h6l2 2v6h-8z" fill="#f4f4f4"/><circle cx="1129.500" cy="752" r="5" fill="#d8242c"/><path d="M1127 749.500l5 5M1132 749.500l-5 5" stroke="#fff" stroke-width="1.500"/>
<rect x="1146.500" y="741.500" width="3" height="5" fill="#eee"/><path d="M1148 746v8h4M1153.500 745.500h12v9h-12zM1159 755v3h-4h8" fill="none" stroke="#e8e8e8" stroke-width="1.300"/>
<path d="M1168 747h3l4-4v12l-4-4h-3z" fill="#e8e8e8"/><path d="M1177 745.500q2 3.500 0 7M1179.500 744q3 5 0 10" fill="none" stroke="#aaa"/>
<text x="1214" y="745" font-size="12" fill="#f0f0f0" textLength="26" lengthAdjust="spacingAndGlyphs">22:08</text>
<text x="1200" y="762" font-size="12" fill="#f0f0f0" textLength="53" lengthAdjust="spacingAndGlyphs">27.06.2017</text>
<rect x="1266.500" y="729.500" width="14" height="37" fill="#1a1f24" stroke="#777"/>
<rect x="1267" y="730" width="13" height="14" fill="#5a5f64" opacity=".7"/>
</svg>
</body></html>
